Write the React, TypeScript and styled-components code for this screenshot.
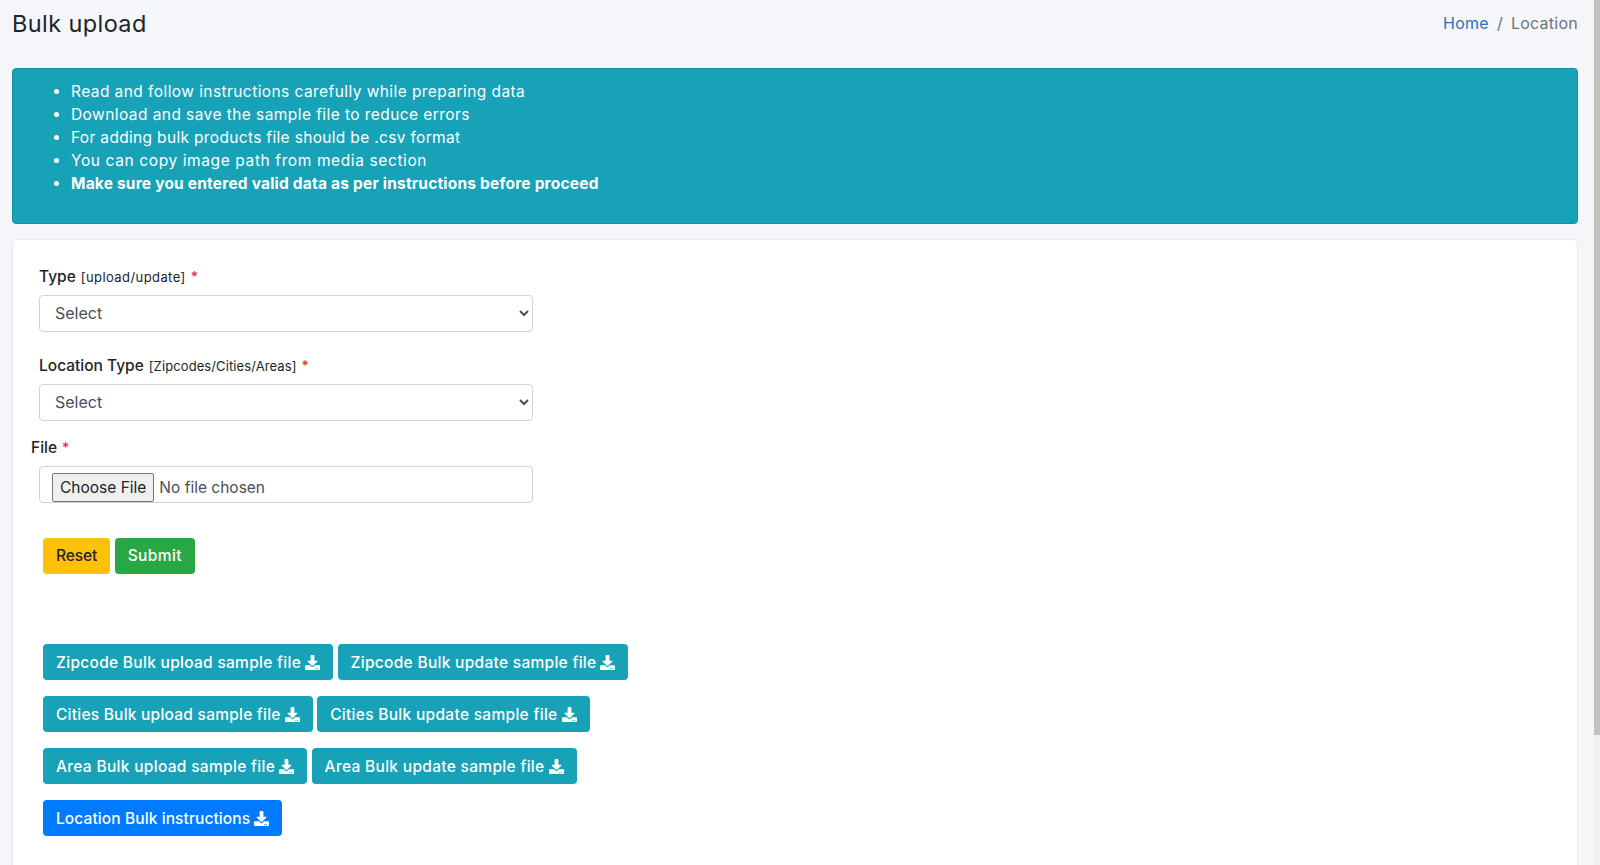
import React from "react";
import styled, { createGlobalStyle } from "styled-components";
import { FaDownload } from "react-icons/fa";

const Global = createGlobalStyle`
  html, body { margin: 0; padding: 0; background: #f4f6f9; overflow: hidden; }
  body { font-family: Inter, "Open Sans", "Liberation Sans", sans-serif; color: #212529; }
`;

const Page = styled.div`
  box-sizing: border-box;
  height: 100vh;
  overflow: hidden;
  padding: 0 22px 0 12px;
`;

const ScrollTrack = styled.div`
  position: fixed;
  top: 0;
  right: 0;
  bottom: 0;
  width: 6px;
  background: #f1f1f1;
`;

const ScrollThumb = styled.div`
  height: 735px;
  background: #c1c1c1;
`;

const Header = styled.header`
  display: flex;
  justify-content: space-between;
  align-items: center;
  height: 46px;
  margin-bottom: 22px;
`;

const Title = styled.h1`
  margin: 0;
  font-size: 23.5px;
  font-weight: 400;
  letter-spacing: 0.4px;
  color: #212529;
`;

const Crumbs = styled.nav`
  display: flex;
  gap: 8px;
  font-size: 16px;
  color: #6c757d;
  letter-spacing: 0.25px;
`;

const CrumbLink = styled.a`
  color: #2f6fc4;
`;

const Alert = styled.div`
  background: #17a2b8;
  border: 1px solid #148ea1;
  border-radius: 4px;
  color: #fff;
  height: 156px;
  box-sizing: border-box;
  padding: 11px 20px;
  margin-bottom: 15px;
`;

const Notes = styled.ul`
  margin: 0;
  padding-left: 38px;
  font-size: 15.5px;
  line-height: 23px;
`;

const Note = styled.li<{ $strong?: boolean; $track: number }>`
  font-weight: ${(p) => (p.$strong ? 700 : 400)};
  letter-spacing: ${(p) => p.$track}px;
`;

const Card = styled.section`
  background: #fff;
  border: 1px solid #e8ebef;
  border-radius: 4px;
  box-shadow: 0 0 1px rgba(0, 0, 0, 0.08);
  padding: 25.5px 18px 0;
  min-height: 700px;
  box-sizing: border-box;
`;

const Group = styled.div<{ $after: number }>`
  width: 494px;
  margin-left: 8px;
  margin-bottom: ${(p) => p.$after}px;
`;

const FileGroup = styled.div`
  width: 502px;
  margin-bottom: 35px;
`;

const Label = styled.label`
  display: block;
  font-size: 15.5px;
  line-height: 22px;
  font-weight: 500;
  margin-bottom: 7.5px;
  color: #212529;
`;

const Hint = styled.small<{ $track: number }>`
  font-size: 13px;
  font-weight: 400;
  letter-spacing: ${(p) => p.$track}px;
  margin-left: 5px;
`;

const Star = styled.span`
  color: #dc3545;
  margin-left: 5px;
  font-size: 14px;
`;

const Select = styled.select`
  display: block;
  width: 494px;
  height: 36.5px;
  padding: 0 11px;
  font: 400 16px Inter, sans-serif;
  color: #495057;
  background: #fff;
  border: 1px solid #ced4da;
  border-radius: 4px;
`;

const FileBox = styled.input`
  display: block;
  box-sizing: border-box;
  width: 494px;
  height: 36.5px;
  margin: 3.5px 0 0 8px;
  padding: 6px 12px;
  font: 400 15.5px Inter, sans-serif;
  color: #495057;
  background: #fff;
  border: 1px solid #ced4da;
  border-radius: 4px;

  &::file-selector-button {
    height: 29px;
    margin: 0 5px 0 0;
    padding: 0 7px;
    font: 400 15.5px Inter, sans-serif;
    color: #212529;
    background: #efefef;
    border: 1px solid #767676;
    border-radius: 2px;
  }
`;

const Row = styled.div`
  display: flex;
  gap: 4.5px;
  margin: 0 0 16px 12px;
`;

const tones = {
  warning: { bg: "#ffc107", fg: "#212529" },
  success: { bg: "#28a745", fg: "#fff" },
  info: { bg: "#17a2b8", fg: "#fff" },
  primary: { bg: "#007bff", fg: "#fff" },
};

const Button = styled.button<{ $tone: keyof typeof tones; $track: number }>`
  display: inline-flex;
  align-items: center;
  justify-content: center;
  gap: 4px;
  height: 36px;
  padding: 0 13px;
  border: 0;
  border-radius: 4px;
  font: 500 15.5px Inter, sans-serif;
  letter-spacing: ${(p) => p.$track}px;
  white-space: nowrap;
  background: ${(p) => tones[p.$tone].bg};
  color: ${(p) => tones[p.$tone].fg};
`;

const Samples = styled.div`
  margin-top: 70.5px;
`;

const sampleRows = [
  { upload: "Zipcode Bulk upload sample file", uploadTrack: 0.29, update: "Zipcode Bulk update sample file", updateTrack: 0.29 },
  { upload: "Cities Bulk upload sample file", uploadTrack: 0.235, update: "Cities Bulk update sample file", updateTrack: 0.3 },
  { upload: "Area Bulk upload sample file", uploadTrack: 0.31, update: "Area Bulk update sample file", updateTrack: 0.31 },
];

export default function App() {
  return (
    <Page>
      <Global />
      <ScrollTrack>
        <ScrollThumb />
      </ScrollTrack>
      <Header>
        <Title>Bulk upload</Title>
        <Crumbs>
          <CrumbLink>Home</CrumbLink>
          <span>/</span>
          <span>Location</span>
        </Crumbs>
      </Header>
      <Alert>
        <Notes>
          <Note $track={0.425}>Read and follow instructions carefully while preparing data</Note>
          <Note $track={0.43}>Download and save the sample file to reduce errors</Note>
          <Note $track={0.33}>For adding bulk products file should be .csv format</Note>
          <Note $track={0.61}>You can copy image path from media section</Note>
          <Note $strong $track={0.2}>Make sure you entered valid data as per instructions before proceed</Note>
        </Notes>
      </Alert>
      <Card>
        <Group $after={23}>
          <Label>
            Type<Hint $track={0.42}>[upload/update]</Hint><Star>*</Star>
          </Label>
          <Select><option>Select</option></Select>
        </Group>
        <Group $after={16}>
          <Label>
            Location Type<Hint $track={0.1}>[Zipcodes/Cities/Areas]</Hint><Star>*</Star>
          </Label>
          <Select><option>Select</option></Select>
        </Group>
        <FileGroup>
          <Label>File<Star>*</Star></Label>
          <FileBox type="file" />
        </FileGroup>
        <Row>
          <Button $tone="warning" $track={-0.1}>Reset</Button>
          <Button $tone="success" $track={0.4}>Submit</Button>
        </Row>
        <Samples>
          {sampleRows.map((r) => (
            <Row key={r.upload}>
              <Button $tone="info" $track={r.uploadTrack}>{r.upload}<FaDownload size={15} /></Button>
              <Button $tone="info" $track={r.updateTrack}>{r.update}<FaDownload size={15} /></Button>
            </Row>
          ))}
          <Row>
            <Button $tone="primary" $track={0.1}>Location Bulk instructions<FaDownload size={15} /></Button>
          </Row>
        </Samples>
      </Card>
    </Page>
  );
}
